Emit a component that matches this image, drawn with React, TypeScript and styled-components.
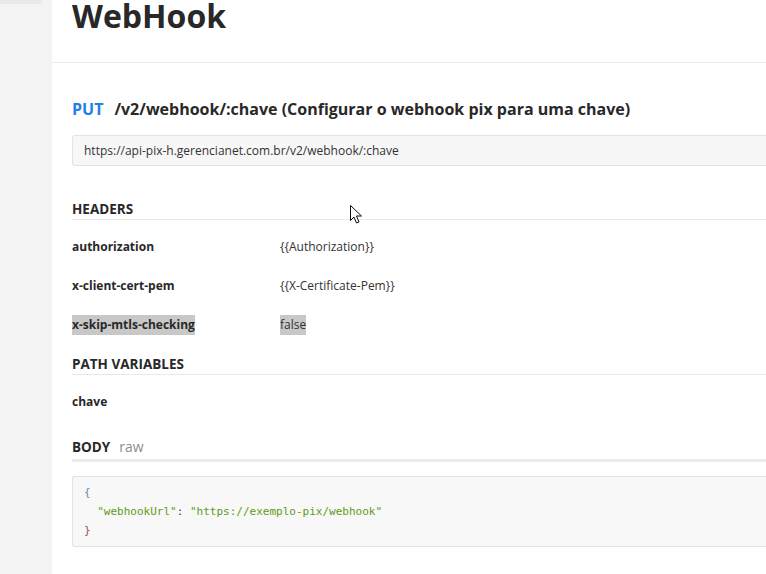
import React from "react";
import styled, { createGlobalStyle } from "styled-components";

const Global = createGlobalStyle`
  html, body { margin: 0; padding: 0; background: #fff; overflow: hidden; }
  body { font-family: "Open Sans", "Noto Sans", sans-serif; color: #282828; }
`;

const Page = styled.div`
  display: flex;
  width: 766px;
  height: 574px;
  overflow: hidden;
  position: relative;
`;

const Sidebar = styled.aside`
  width: 52px;
  flex: none;
  background: #f3f3f3;
`;

const SidebarTab = styled.div`
  width: 42px;
  height: 4px;
  background: #e9e9e9;
`;

const Main = styled.main`
  flex: 1;
  min-width: 0;
  background: #fff;
`;

const TitleBar = styled.header`
  height: 62px;
  border-bottom: 1px solid #ececec;
  padding-left: 20px;
  overflow: hidden;
`;

const Title = styled.h1`
  margin: 0;
  margin-top: -8px;
  font-size: 32px;
  font-weight: 700;
  line-height: 48px;
  color: #282828;
`;

const Content = styled.section`
  padding: 34px 0 0 20px;
`;

const RequestLine = styled.div`
  display: flex;
  align-items: baseline;
  gap: 11px;
  font-size: 16px;
  font-weight: 700;
  line-height: 24px;
  color: #282828;
`;

const Method = styled.span`
  color: #1e80e8;
`;

const UrlBox = styled.div`
  margin-top: 14px;
  height: 29px;
  border: 1px solid #e4e4e4;
  border-right: none;
  border-radius: 3px 0 0 3px;
  background: #f7f7f7;
  padding-left: 11px;
  font-size: 12px;
  line-height: 29px;
  color: #333;
`;

const SectionHead = styled.div<{ $thick?: boolean }>`
  display: flex;
  align-items: baseline;
  gap: 9px;
  padding-bottom: ${(p) => (p.$thick ? "2px" : "0")};
  border-bottom: ${(p) => (p.$thick ? "3px solid #ececec" : "1px solid #e8e8e8")};
  font-size: 13.5px;
  font-weight: 700;
  line-height: 20px;
  color: #282828;
  text-transform: uppercase;
`;

const SubLabel = styled.span`
  font-size: 14px;
  font-weight: 400;
  color: #8c8c8c;
  text-transform: none;
`;

const Section = styled.div<{ $top: number }>`
  margin-top: ${(p) => p.$top}px;
`;

const Row = styled.div`
  display: grid;
  grid-template-columns: 208px 1fr;
  align-items: center;
  height: 39px;
  font-size: 12px;
`;

const Key = styled.span<{ $sel?: boolean }>`
  justify-self: start;
  font-weight: 700;
  color: #282828;
  line-height: 20px;
  background: ${(p) => (p.$sel ? "#c8c8c8" : "transparent")};
`;

const Value = styled.span<{ $sel?: boolean }>`
  justify-self: start;
  color: #333;
  line-height: 20px;
  background: ${(p) => (p.$sel ? "#c8c8c8" : "transparent")};
`;

const Rows = styled.div`
  padding-top: 7px;
`;

const CodeBox = styled.pre`
  margin: 14px 0 0 0;
  padding: 6px 10px 6px 11px;
  border: 1px solid #e2e2e2;
  border-right: none;
  border-radius: 3px 0 0 3px;
  background: #f8f8f8;
  font-family: "DejaVu Sans Mono", "Liberation Mono", monospace;
  font-size: 11px;
  line-height: 19px;
  color: #444;
`;

const Brace = styled.span<{ $close?: boolean }>`
  color: ${(p) => (p.$close ? "#a0524b" : "#6a8aa8")};
`;

const Str = styled.span`
  color: #5c9c14;
`;

const Cursor = styled.svg`
  position: absolute;
  left: 350px;
  top: 205px;
`;

export default function App() {
  return (
    <>
      <Global />
      <Page>
        <Sidebar>
          <SidebarTab />
        </Sidebar>
        <Main>
          <TitleBar>
            <Title>WebHook</Title>
          </TitleBar>
          <Content>
            <RequestLine>
              <Method>PUT</Method>
              <span>/v2/webhook/:chave (Configurar o webhook pix para uma chave)</span>
            </RequestLine>
            <UrlBox>https://api-pix-h.gerencianet.com.br/v2/webhook/:chave</UrlBox>

            <Section $top={33}>
              <SectionHead>Headers</SectionHead>
              <Rows>
                <Row>
                  <Key>authorization</Key>
                  <Value>{"{{Authorization}}"}</Value>
                </Row>
                <Row>
                  <Key>x-client-cert-pem</Key>
                  <Value>{"{{X-Certificate-Pem}}"}</Value>
                </Row>
                <Row>
                  <Key $sel>x-skip-mtls-checking</Key>
                  <Value $sel>false</Value>
                </Row>
              </Rows>
            </Section>

            <Section $top={10}>
              <SectionHead>Path Variables</SectionHead>
              <Rows>
                <Row>
                  <Key>chave</Key>
                </Row>
              </Rows>
            </Section>

            <Section $top={16}>
              <SectionHead $thick>
                Body <SubLabel>raw</SubLabel>
              </SectionHead>
              <CodeBox>
                <Brace>{"{"}</Brace>
                {"\n  "}
                <Str>"webhookUrl"</Str>: <Str>"https://exemplo-pix/webhook"</Str>
                {"\n"}
                <Brace $close>{"}"}</Brace>
              </CodeBox>
            </Section>
          </Content>
        </Main>
        <Cursor width="13" height="20" viewBox="0 0 13 20">
          <path d="M0.5 0.5 L0.5 15.5 L4 12 L6.5 18 L9 17 L6.5 11 L11.5 11 Z" fill="#fff" stroke="#111" strokeWidth="1" />
        </Cursor>
      </Page>
    </>
  );
}
